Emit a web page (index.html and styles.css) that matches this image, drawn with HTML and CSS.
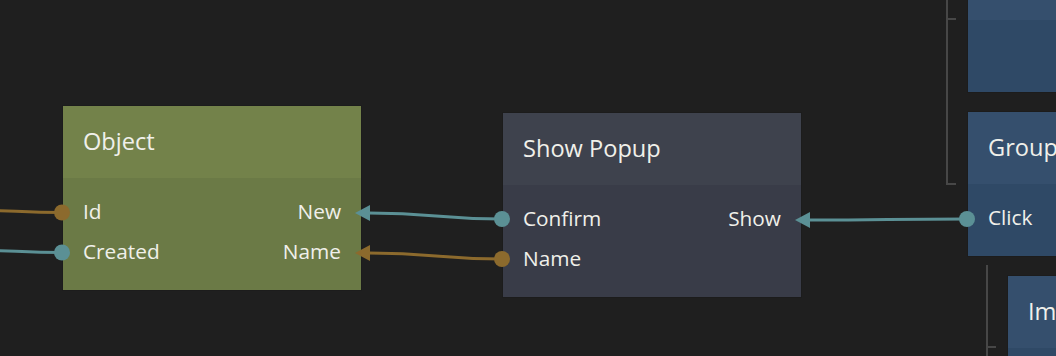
FILE: index.html
```html
<!DOCTYPE html>
<html lang="en">
<head>
  <meta charset="UTF-8">
  <title>Node graph</title>
  <link rel="stylesheet" href="styles.css">
</head>
<body>
  <div class="canvas">
    <div class="tree-line tree-a"></div>
    <div class="tree-tick tick-a1"></div>
    <div class="tree-tick tick-a2"></div>
    <div class="tree-line tree-b"></div>
    <div class="tree-tick tick-b1"></div>

    <div class="node node-object" style="left:62px; top:105px;">
      <div class="node-header">Object</div>
      <div class="node-body">
        <div class="port"><span>Id</span><span>New</span></div>
        <div class="port"><span>Created</span><span>Name</span></div>
      </div>
    </div>

    <div class="node node-popup" style="left:502px; top:112px;">
      <div class="node-header">Show Popup</div>
      <div class="node-body">
        <div class="port"><span>Confirm</span><span>Show</span></div>
        <div class="port"><span>Name</span><span></span></div>
      </div>
    </div>

    <div class="node node-visual" style="left:967px; top:-53px;">
      <div class="node-header"></div>
      <div class="node-body">
        <div class="port"><span></span></div>
      </div>
    </div>

    <div class="node node-visual" style="left:967px; top:111px;">
      <div class="node-header">Group</div>
      <div class="node-body">
        <div class="port"><span>Click</span></div>
      </div>
    </div>

    <div class="node node-visual" style="left:1007px; top:275px;">
      <div class="node-header">Im</div>
      <div class="node-body"></div>
    </div>

    <svg class="wires" width="1056" height="356" viewBox="0 0 1056 356">
      <!-- incoming from off screen -->
      <path class="wire orange" d="M-40 210 C 10 210, 20 212.5, 62 212.5" />
      <path class="wire teal" d="M-40 250 C 10 250, 20 252.5, 62 252.5" />
      <circle class="orange-fill" cx="62" cy="212.5" r="8" />
      <circle class="teal-fill" cx="62" cy="252.5" r="8" />

      <!-- popup -> object -->
      <path class="wire teal" d="M369 213 C 436 213, 436 219, 502 219" />
      <path class="wire orange" d="M369 253 C 436 253, 436 259, 502 259" />
      <polygon class="teal-fill" points="355,213 370,205 370,221" />
      <polygon class="orange-fill" points="355,253 370,245 370,261" />
      <circle class="teal-fill" cx="502" cy="219" r="8" />
      <circle class="orange-fill" cx="502" cy="259" r="8" />

      <!-- group -> popup -->
      <path class="wire teal" d="M809 220 C 888 220, 888 219, 967 219" />
      <polygon class="teal-fill" points="795,220 810,212 810,228" />
      <circle class="teal-fill" cx="967" cy="219" r="8" />
    </svg>
  </div>
</body>
</html>
```

FILE: styles.css
```css
body {
  margin: 0;
  background-color: #1f1f1f;
  font-family: "Open Sans", "Noto Sans", sans-serif;
  color: #f0f0ea;
}
.canvas {
  position: relative;
  width: 1056px;
  height: 356px;
  overflow: hidden;
}
.node {
  position: absolute;
  width: 300px;
  box-sizing: border-box;
  border: 1px solid rgba(0, 0, 0, 0.08);
}
.node-header {
  height: 72px;
  box-sizing: border-box;
  display: flex;
  align-items: center;
  padding: 0 20px 3px;
  font-size: 23.6px;
  white-space: nowrap;
}
.node-body {
  padding: 13px 0 19px;
  min-height: 40px;
}
.port {
  height: 40px;
  display: flex;
  align-items: center;
  justify-content: space-between;
  padding: 0 20px;
  font-size: 20.8px;
}
.node-object .node-header { background-color: #73824a; }
.node-object .node-body { background-color: #6b7a46; }
.node-popup .node-header { background-color: #3e424d; }
.node-popup .node-body { background-color: #393c48; }
.node-visual { width: 220px; }
.node-visual .node-header { background-color: #354f6d; }
.node-visual .node-body { background-color: #2f4966; }

.tree-line, .tree-tick {
  position: absolute;
  background-color: #474747;
}
.tree-line { width: 2px; }
.tree-tick { height: 2px; width: 10px; }
.tree-a { left: 946px; top: 0; height: 185px; }
.tick-a1 { left: 946px; top: 18px; }
.tick-a2 { left: 946px; top: 183px; }
.tree-b { left: 986px; top: 265px; height: 100px; }
.tick-b1 { left: 986px; top: 346px; }

.wires {
  position: absolute;
  left: 0;
  top: 0;
  pointer-events: none;
}
.wire {
  fill: none;
  stroke-width: 3;
}
.wire.teal { stroke: #5b9095; }
.wire.orange { stroke: #8c6a2d; }
.teal-fill { fill: #5b9095; }
.orange-fill { fill: #8c6a2d; }
```
